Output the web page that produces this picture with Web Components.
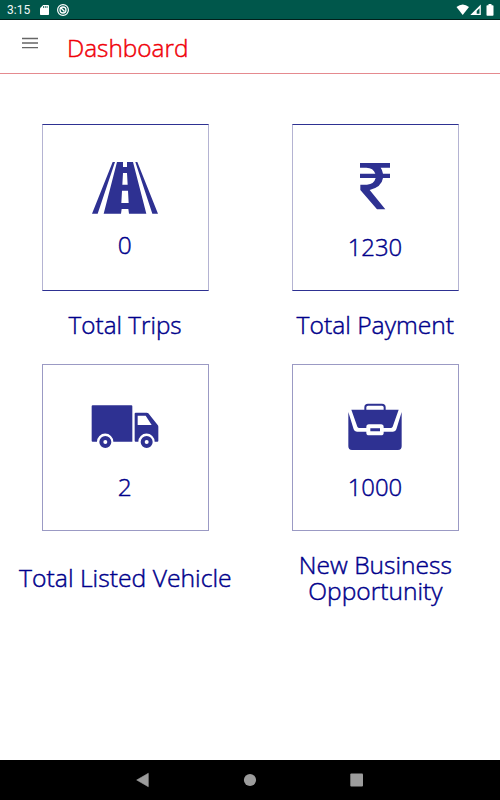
<!DOCTYPE html>
<html lang="en">
<head>
<meta charset="utf-8">
<title>Dashboard</title>
<style>
html,body{margin:0;height:100%;background:#fff}
body{font-family:"Open Sans","Noto Sans",sans-serif;font-weight:300;overflow:hidden}
</style>
</head>
<body>
<dashboard-app></dashboard-app>
<script>
function define(name, html, setup) {
  const tpl = document.createElement('template');
  tpl.innerHTML = html;
  customElements.define(name, class extends HTMLElement {
    connectedCallback() {
      if (this.shadowRoot) return;
      this.attachShadow({mode: 'open'}).append(tpl.content.cloneNode(true));
      if (setup) setup(this, this.shadowRoot);
    }
  });
}

/* Text condensed horizontally so that its widest line has the given width. */
define('fit-text', `
<style>
:host{display:flex;justify-content:center;line-height:26px;font-size:24.500px;white-space:pre;text-align:center;-webkit-text-stroke:.45px currentColor}
span{display:block;flex:none;transform-origin:50% 50%}
:host([start]){justify-content:flex-start}
:host([start]) span{transform-origin:0 50%}
</style><span><slot></slot></span>`, (el, root) => {
  const s = root.querySelector('span');
  const w = s.getBoundingClientRect().width;
  s.style.transform = 'translateY(.5px) scaleX(' + (el.getAttribute('width') / w) + ')';
});

define('status-bar', `
<style>
:host{display:flex;box-sizing:border-box;height:20px;background:#00574b;border-bottom:1px solid #00201b;color:#fff;align-items:center;padding:0 6px 0 7px;font:12px/19px Roboto,sans-serif}
.t{width:33px;color:#f2f7f6;padding-top:2px}
svg{display:block}.sp{flex:1}
</style>
<span class="t">3:15</span>
<svg width="30" height="20" viewBox="0 0 30 20">
 <path d="M3.2 5H8.2Q9 5 9 5.800V14.200Q9 15 8.200 15H.8Q0 15 0 14.200V8.200z" fill="#fff"/>
 <path d="M3.500 6v2M5.300 6v2M7.100 6v2" stroke="#00574b" stroke-width=".8"/>
 <g fill="none" stroke="#fff"><circle cx="23" cy="10" r="5.400" stroke-width="1.200"/><circle cx="23" cy="10" r="3" stroke-width="1.300"/><path d="M20.500 7.500l4 4" stroke-width="1.500"/></g>
</svg>
<span class="sp"></span>
<svg width="38" height="20" viewBox="456 0 38 20" fill="#fff">
 <path d="M456.500 7Q462.700 1.800 469 7L462.700 15z"/>
 <path fill-rule="evenodd" d="M480.800 4.500V15H470.300zM479.500 8.200L476.700 11V13.700H479.500z"/>
 <path d="M488.500 4h3v1.200h1.300q.7 0 .7.7v9q0 .8-.8.800h-5.400q-.8 0-.8-.8v-9q0-.7.700-.7h1.300z"/>
</svg>`);

define('app-header', `
<style>
:host{display:flex;box-sizing:border-box;height:54px;border-bottom:1px solid #e58a8f;color:#f00008;padding:14px 0 0 22px;background:#fff}
svg{display:block;margin:1px 28.500px 0 0}
</style>
<svg width="16" height="16" viewBox="0 0 16 16" stroke="#666" stroke-width="1.300"><path d="M0 3.500h16M0 8h16M0 12.600h16"/></svg>
<slot></slot>`);

define('stat-card', `
<style>
:host{display:block;width:250px;color:#00008b}
.box{box-sizing:border-box;width:167px;height:167px;margin-left:41.500px;border:1px solid #b4b3d2;border-top-color:#2e3192;border-bottom-color:#2e3192;padding-top:35px}
:host([soft]) .box{border-color:#9b9ac4}
.icon{margin-left:47.500px;height:60px}
.num{margin-left:-.5px;padding-top:var(--num,13px)}
.label{padding-top:var(--label,20px)}
::slotted(svg){display:block;fill:#2e3192}
</style>
<div class="box"><div class="icon"><slot name="icon"></slot></div><div class="num"><slot name="value"></slot></div></div>
<div class="label"><slot></slot></div>`);

define('nav-bar', `
<style>
:host{display:flex;height:40px;background:#000;justify-content:center}
svg{display:block}
</style>
<svg width="300" height="40" viewBox="100 760 300 40" fill="#9c9c9c"><path d="M136.700 780L148.300 773.300V786.700z" stroke="#9c9c9c" stroke-width=".6"/><circle cx="250" cy="780" r="6.100"/><rect x="350.300" y="773.500" width="12.700" height="13" rx="1"/></svg>`);

define('dashboard-app', `
<style>
:host{display:flex;flex-direction:column;width:500px;height:800px;background:#fff}
main{flex:1;display:grid;grid-template-columns:250px 250px;grid-template-rows:240px auto;padding-top:50px;align-content:start}
.tall{--label:33px}
</style>
<status-bar></status-bar>
<app-header><fit-text start width="121.500">Dashboard</fit-text></app-header>
<main>
 <stat-card style="--num:11px">
  <svg slot="icon" width="70" height="60" viewBox="180 135 210 180"><path d="M248 141h7L203 296h-17zM316 141h6l62 155h-17zM261 141h18v15h12v-15h18l40 155h-52l-2-14h-20l-2 14h-52zM279 174l-2 35h16l-2-35zM276 227l-2 37h22l-2-37z" fill-rule="evenodd"/></svg>
  <fit-text slot="value" width="14">0</fit-text>
  <fit-text width="113">Total Trips</fit-text>
 </stat-card>
 <stat-card>
  <svg slot="icon" width="70" height="60" viewBox="180 135 210 180"><path d="M240 144h90v14h-28q5 6 7 18h21v13h-21q-4 27-40 36l47 58h-25l-50-58v-16h20q21-1 26-20h-47v-13h46q-6-18-27-18h-19z"/></svg>
  <fit-text slot="value" width="54.500">1230</fit-text>
  <fit-text width="157.500">Total Payment</fit-text>
 </stat-card>
 <stat-card soft class="tall">
  <svg slot="icon" width="70" height="60" viewBox="180 135 210 180"><path d="M188 151h116q3 0 3 3v106h-57a24.500 24.500 0 0 0-49 0h-13q-3 0-3-3V154q0-3 3-3zM317 173h33q3 0 5 2l28 35q2 2 2 5v42q0 3-3 3h-8a24.500 24.500 0 0 0-49 0h-8q-3 0-3-3v-81q0-3 3-3zM323 182v28h42l-18-28z" fill-rule="evenodd"/><g fill="none" stroke="#2e3192" stroke-width="12"><circle cx="226" cy="261" r="12"/><circle cx="350" cy="261" r="12"/></g></svg>
  <fit-text slot="value" width="14">2</fit-text>
  <fit-text width="212.500">Total Listed Vehicle</fit-text>
 </stat-card>
 <stat-card soft>
  <svg slot="icon" width="70" height="60" viewBox="180 135 210 180"><path d="M256 166v-9q0-8 8-8h42q8 0 8 8v9" fill="none" stroke="#2e3192" stroke-width="6"/><path d="M214 164h142l-18 51q-2 4-6 4h-21v-3q0-8-8-8h-36q-8 0-8 8v3h-21q-4 0-6-4zM205 171l16 52q2 7 10 7h28v3q0 8 8 8h36q8 0 8-8v-3h28q8 0 10-7l16-52v103q0 11-11 11h-138q-11 0-11-11zM271 220h29v9h-29z"/></svg>
  <fit-text slot="value" width="54.500">1000</fit-text>
  <fit-text width="153">New Business
Opportunity</fit-text>
 </stat-card>
</main>
<nav-bar></nav-bar>`);
</script>
</body>
</html>
